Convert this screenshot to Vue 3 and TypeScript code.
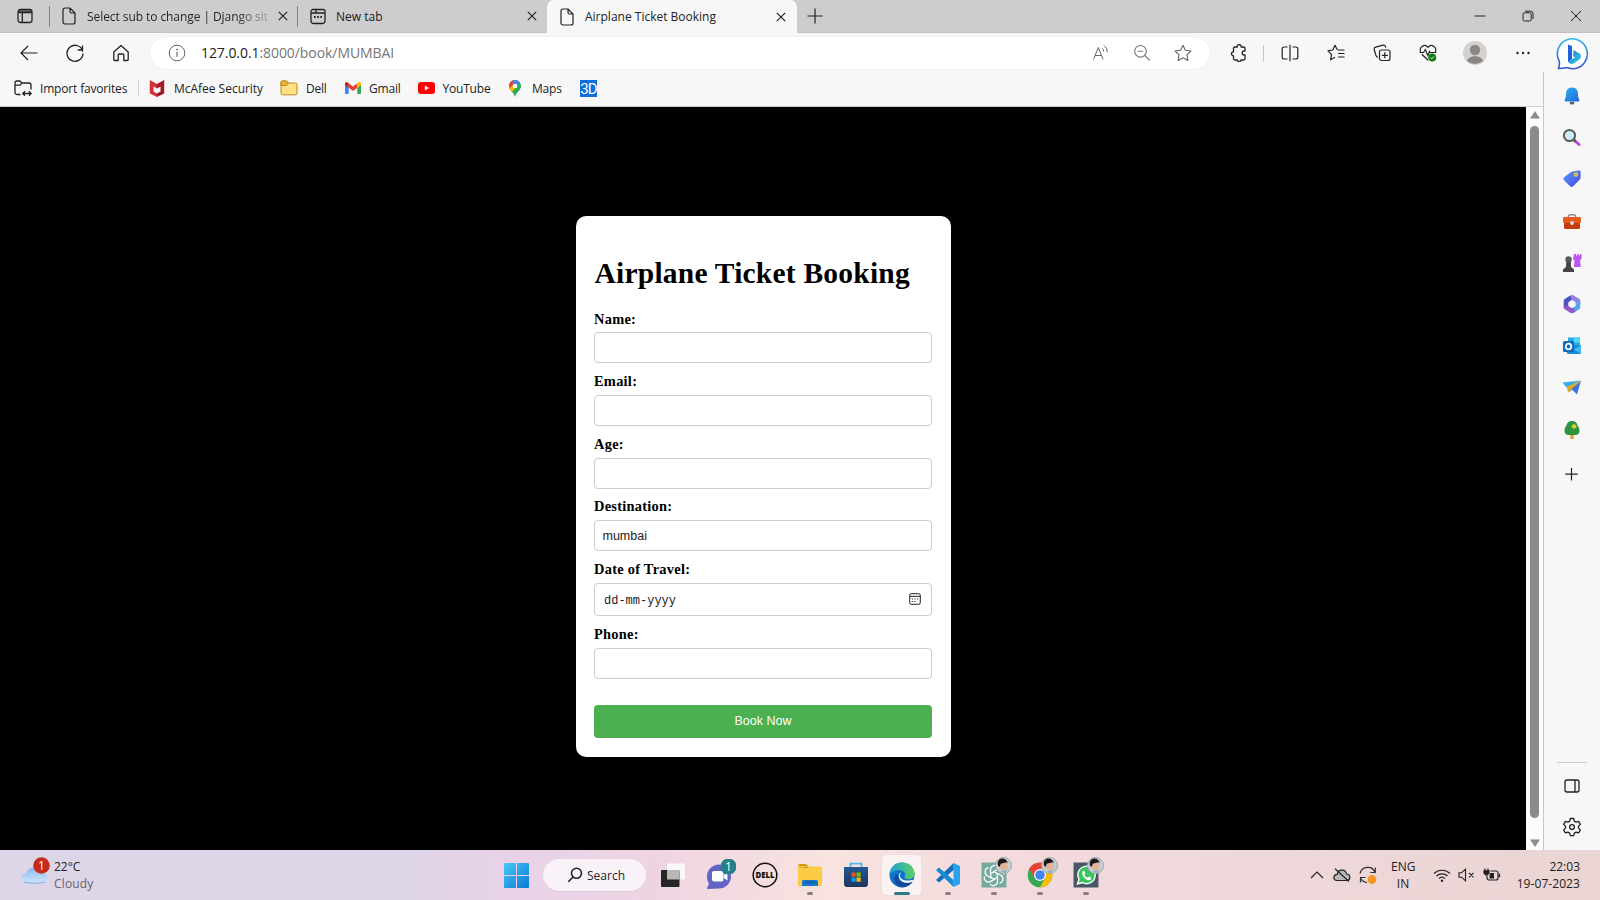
<script setup lang="ts">
import { ref } from 'vue'

interface Field {
  id: string
  label: string
  value: string
  kind: 'text' | 'date'
}

const fields = ref<Field[]>([
  { id: 'name', label: 'Name:', value: '', kind: 'text' },
  { id: 'email', label: 'Email:', value: '', kind: 'text' },
  { id: 'age', label: 'Age:', value: '', kind: 'text' },
  { id: 'destination', label: 'Destination:', value: 'mumbai', kind: 'text' },
  { id: 'date', label: 'Date of Travel:', value: '', kind: 'date' },
  { id: 'phone', label: 'Phone:', value: '', kind: 'text' },
])
</script>

<template>
  <div class="screen">
    <header class="tabs">
      <div class="tab-menu">
        <svg width="16" height="16" viewBox="0 0 16 16" fill="none" stroke="#222" stroke-width="1.3"><rect x="1" y="1.5" width="14" height="13" rx="2.5" /><path d="M1 3.2h14M1.5 4.6h13M5.3 5v9" /></svg>
      </div>
      <div class="tab first">
        <svg class="page" width="14" height="18" viewBox="0 0 14 18" fill="none" stroke="#222" stroke-width="1.2"><path d="M3 1h5l5 5v9a2 2 0 0 1-2 2H3a2 2 0 0 1-2-2V3a2 2 0 0 1 2-2zM8 1v3.5A1.5 1.5 0 0 0 9.500 6H13" /></svg>
        <span class="title faded">Select sub to change | Django sit</span>
        <svg class="x" width="10" height="10" viewBox="0 0 10 10" stroke="#222" stroke-width="1.2"><path d="M.8.8l8.400 8.400M9.200.8L.8 9.200" /></svg>
      </div>
      <div class="tab second">
        <svg class="page" width="16" height="17" viewBox="0 0 16 17" fill="none" stroke="#222" stroke-width="1.300"><path d="M1 5V3.500A2 2 0 0 1 3 1.500h10a2 2 0 0 1 2 2V13a2.500 2.500 0 0 1-2.500 2.500h-9A2.500 2.500 0 0 1 1 13zM1 5h14M6 1.500V3.500a1.500 1.500 0 0 0 1.500 1.500" /><path d="M4 9h1.600M7.200 9h1.600M10.400 9H12" stroke-width="1.800" /></svg>
        <span class="title new-title">New tab</span>
        <svg class="x" width="10" height="10" viewBox="0 0 10 10" stroke="#222" stroke-width="1.2"><path d="M.8.8l8.400 8.400M9.200.8L.8 9.200" /></svg>
      </div>
      <div class="tab active">
        <svg class="page" width="14" height="18" viewBox="0 0 14 18" fill="none" stroke="#222" stroke-width="1.2"><path d="M3 1h5l5 5v9a2 2 0 0 1-2 2H3a2 2 0 0 1-2-2V3a2 2 0 0 1 2-2zM8 1v3.500A1.500 1.500 0 0 0 9.500 6H13" /></svg>
        <span class="title">Airplane Ticket Booking</span>
        <svg class="x" width="10" height="10" viewBox="0 0 10 10" stroke="#222" stroke-width="1.2"><path d="M.8.8l8.400 8.400M9.200.8L.8 9.200" /></svg>
      </div>
      <svg class="new" width="16" height="16" viewBox="0 0 16 16" stroke="#222" stroke-width="1.2"><path d="M8 .5v15M.5 8h15" /></svg>
      <div class="win">
        <svg width="12" height="12" viewBox="0 0 12 12" stroke="#222" fill="none"><path d="M.5 6h11" /></svg>
        <svg width="12" height="12" viewBox="0 0 12 12" stroke="#222" fill="none"><rect x="1" y="2.800" width="8.200" height="8.200" rx="1.500" /><path d="M3 1.200h5.500A2.500 2.500 0 0 1 11 3.700V9" /></svg>
        <svg width="12" height="12" viewBox="0 0 12 12" stroke="#222" fill="none"><path d="M.8.8l10.400 10.400M11.200.8L.8 11.200" /></svg>
      </div>
    </header>

    <nav class="toolbar">
      <div class="nav-buttons">
        <svg width="20" height="20" viewBox="0 0 20 20" fill="none" stroke="#222" stroke-width="1.200"><path d="M18.500 10H2M9 3L2 10l7 7" /></svg>
        <svg width="20" height="20" viewBox="0 0 20 20" fill="none" stroke="#222" stroke-width="1.300"><path d="M17.800 8.500A8 8 0 1 0 18 10.500M17.500 2.500V7h-4.800" /></svg>
        <svg width="20" height="20" viewBox="0 0 20 20" fill="none" stroke="#222" stroke-width="1.300" stroke-linejoin="round"><path d="M2.800 9L10 2.500 17.200 9v7.500a1 1 0 0 1-1 1h-3.400V12a1 1 0 0 0-1-1H8.200a1 1 0 0 0-1 1v5.500H3.800a1 1 0 0 1-1-1z" /></svg>
      </div>
      <div class="address">
        <svg width="18" height="18" viewBox="0 0 18 18" fill="none" stroke="#666"><circle cx="9" cy="9" r="7.800" /><path d="M9 7.800v5" stroke-width="1.200" /><circle cx="9" cy="5.500" r=".5" fill="#666" /></svg>
        <span class="url"><b>127.0.0.1</b>:8000/book/MUMBAI</span>
        <div class="addr-actions">
          <svg width="18" height="18" viewBox="0 0 18 18" fill="none" stroke="#666"><path d="M1.500 15.500L6.300 3.500l4.800 12M3.200 11.500h6.200M10.200 4.200a4.500 4.500 0 0 1 1.500 3.300M12 1.500a8.500 8.500 0 0 1 3.400 6.800" /></svg>
          <svg width="18" height="18" viewBox="0 0 18 18" fill="none" stroke="#777" stroke-width="1.100"><circle cx="7.500" cy="7.300" r="5.800" /><path d="M4.800 7.300h5.400M11.800 11.500l5 5" /></svg>
          <svg width="18" height="18" viewBox="0 0 18 18" fill="none" stroke="#666" stroke-width="1.100" stroke-linejoin="round"><path d="M9 1.200l2.400 5 5.500.8-4 3.800 1 5.600L9 13.800l-4.900 2.600 1-5.600L1.100 7l5.500-.8z" /></svg>
        </div>
      </div>
      <div class="tool-icons">
        <svg width="18" height="18" viewBox="0 0 18 18" fill="none" stroke="#222" stroke-width="1.300" stroke-linejoin="round"><path d="M5 3h2.200a2 2 0 1 1 3.900 0h2.400A1.500 1.500 0 0 1 15 4.500V7h-.8a2 2 0 0 0 0 4H15v3.500a1.500 1.500 0 0 1-1.500 1.500h-2.400a2 2 0 0 1-3.900 0H5a1.500 1.500 0 0 1-1.500-1.500v-2.700a2 2 0 1 1 0-4V4.500A1.500 1.500 0 0 1 5 3z" /></svg>
        <i class="sep"></i>
        <svg width="18" height="18" viewBox="0 0 18 18" fill="none" stroke="#222" stroke-width="1.200"><path d="M9 .8v16.400M6.500 3H3a1.800 1.800 0 0 0-1.800 1.800v8.400A1.800 1.800 0 0 0 3 15h3.500M11.500 3H15a1.800 1.800 0 0 1 1.800 1.800v8.400A1.800 1.800 0 0 1 15 15h-3.500" /></svg>
        <svg width="18" height="18" viewBox="0 0 18 18" fill="none" stroke="#222" stroke-width="1.200" stroke-linejoin="round"><path d="M10.300 5.800L8 1.300 5.800 6 1 6.800l3.500 3.500-.9 5.500L8 13.300M10.500 6h7M11 9.500h6.500M11 13h6.500" /></svg>
        <svg width="18" height="18" viewBox="0 0 18 18" fill="none" stroke="#222" stroke-width="1.200"><rect x="6.500" y="6" width="10.500" height="10.500" rx="2" /><path d="M11.800 8.300v6M8.800 11.300h6M4.800 13.500C3 12.800 2.800 11.500 2.500 10L1.200 5.500A2 2 0 0 1 2.600 3.200L10 1.200c1.400-.3 2.200.5 2.500 1.500l.3 1" /></svg>
        <svg width="18" height="18" viewBox="0 0 18 18" fill="none" stroke="#222" stroke-width="1.200"><path d="M1.600 8C-.2 3 5.500-.7 9 3.300c3.500-4 9.200-.3 7.400 4.700M2.800 10.200L9 16.300M.5 8.500h4l1.800-3 2.500 6 1.700-4 .8 1h6" /><circle cx="13.200" cy="13.500" r="3.800" fill="#107c10" stroke="#107c10" stroke-width=".6" /><path d="M11.400 13.600l1.300 1.300 2.300-2.400" stroke="#fff" stroke-width=".9" /></svg>
        <svg class="avatar" width="24" height="24" viewBox="0 0 24 24"><circle cx="12" cy="12" r="12" fill="#d4d1cf" /><circle cx="12" cy="9" r="5.200" fill="#8b8785" /><path d="M4 20c1.500-6.500 14.500-6.500 16 0a12 12 0 0 1-16 0z" fill="#8b8785" /></svg>
        <svg width="18" height="18" viewBox="0 0 18 18" fill="#222"><circle cx="3.500" cy="9" r="1.200" /><circle cx="9" cy="9" r="1.200" /><circle cx="14.500" cy="9" r="1.200" /></svg>
        <svg class="bing" width="34" height="34" viewBox="0 0 34 34"><defs><linearGradient id="bb" x2="0" y2="1"><stop stop-color="#34b9ef" /><stop offset="1" stop-color="#3553cf" /></linearGradient><linearGradient id="bl" x2="1" y2="1"><stop stop-color="#226bd8" /><stop offset="1" stop-color="#36d8e8" /></linearGradient></defs><path d="M2.500 31.500c1-2.500 1.300-4.500.7-7.500A15 15 0 1 1 17.500 31.800c-2.500 0-4.500-.6-6-1.300-3 .5-5.500 1.200-9 1z" fill="#fff" stroke="url(#bb)" stroke-width="1.600" stroke-linejoin="round" /><path d="M12 7.500l4 1.500v13l-4 3z" fill="#1d63dc" /><path d="M17.500 13l6 3.500c2 1.500 2 4 0 6l-5 3.500c-3 1.800-5 .8-6.500-1.500l7-4-2-1.500z" fill="url(#bl)" /></svg>
      </div>
    </nav>

    <div class="bookmarks">
      <div class="mark import">
        <svg width="18" height="17" viewBox="0 0 18 17" fill="none" stroke="#222" stroke-width="1.300"><path d="M6.500 14.500H3a2 2 0 0 1-2-2V3a2 2 0 0 1 2-2h2.800L8 3h7a2 2 0 0 1 2 2v4.500M1 5.200h5L8 3M9 13.500h8M11 11.300l-2.200 2.200L11 15.700M15 11.300l2.200 2.200-2.200 2.200" /></svg>
        <span>Import favorites</span>
      </div>
      <div class="mark mcafee">
        <svg width="16" height="17" viewBox="0 0 16 17"><path d="M.8 0L8 4v4.500L4.500 6.500v5L8 13.500V17L.8 13.500z" fill="#d5303a" /><path d="M15.200 0L8 4v4.500l3.500-2v5L8 13.500V17l7.200-3.500z" fill="#a3192a" /></svg>
        <span>McAfee Security</span>
      </div>
      <div class="mark dell">
        <svg width="18" height="16" viewBox="0 0 18 16" stroke="#b98a1a"><path d="M1 13V2.500A1.500 1.500 0 0 1 2.500 1h4l2 2h7A1.500 1.500 0 0 1 17 4.500V13a1.800 1.800 0 0 1-1.800 1.800H2.800A1.800 1.800 0 0 1 1 13z" fill="#ffe083" /><path d="M1 5.500h5.500L8.500 3l-2-2h-4A1.500 1.500 0 0 0 1 2.500z" fill="#e9b63a" /></svg>
        <span>Dell</span>
      </div>
      <div class="mark gmail">
        <svg width="16" height="12" viewBox="0 0 16 12"><path d="M1 12h2.700V5.500L0 2.800V11a1 1 0 0 0 1 1z" fill="#4285f4" /><path d="M12.300 12H15a1 1 0 0 0 1-1V2.800l-3.700 2.700z" fill="#34a853" /><path d="M3.700 1.200v4.500L8 9l4.300-3.300V1.200L8 4.500z" fill="#ea4335" /><path d="M0 1.800v1.500l3.700 2.600V1.200L2.500.4C1.300-.5 0 .4 0 1.800z" fill="#c5221f" /><path d="M16 1.800v1.500l-3.700 2.600V1.200l1.200-.8C14.700-.5 16 .4 16 1.800z" fill="#fbbc04" /></svg>
        <span>Gmail</span>
      </div>
      <div class="mark youtube">
        <svg width="17" height="12" viewBox="0 0 17 12"><rect width="17" height="12" rx="3" fill="#f00" /><path d="M6.800 3.500v5l4.300-2.500z" fill="#fff" /></svg>
        <span>YouTube</span>
      </div>
      <div class="mark maps">
        <svg width="12" height="17" viewBox="0 0 12 17"><defs><clipPath id="pin"><path d="M6 0a6 6 0 0 1 6 6c0 4.500-4.500 5.500-6 11C4.500 11.500 0 10.500 0 6a6 6 0 0 1 6-6z" /></clipPath></defs><g clip-path="url(#pin)"><path d="M0 0h12v17H0z" fill="#34a853" /><path d="M-1 11L12-3 0-2z" fill="#ea4335" /><path d="M3 0h10L6.500 7z" fill="#4285f4" /><path d="M-1 5l3-2 5 4-5 6z" fill="#fbbc04" /><path d="M-1 5l3-4 3 3-4 4z" fill="#ea4335" /></g><circle cx="6" cy="6" r="2.300" fill="#fff" /></svg>
        <span>Maps</span>
      </div>
      <div class="three-d">3D</div>
    </div>

    <main class="viewport">
      <form class="card" @submit.prevent>
        <h1>Airplane Ticket Booking</h1>
        <div v-for="field in fields" :key="field.id" class="field">
          <label :for="field.id">{{ field.label }}</label>
          <div v-if="field.kind === 'date'" class="control date">
            <span>dd-mm-yyyy</span>
            <svg width="12" height="12" viewBox="0 0 12 12" fill="none" stroke="#222"><rect x=".7" y=".7" width="10.600" height="10.600" rx="1.500" /><path d="M.7 3.300h10.600" /><path d="M2.800 6h1.100M5.400 6h1.100M8 6h1.100M2.800 8.500h1.100M5.400 8.500h1.100" stroke-width="1.200" /></svg>
          </div>
          <input v-else :id="field.id" v-model="field.value" class="control" type="text" />
        </div>
        <button type="submit">Book Now</button>
      </form>
    </main>

    <div class="scrollbar">
      <svg width="10" height="8" viewBox="0 0 10 8"><path d="M5 .5L9.500 7.200H.5z" fill="#8b8b8b" stroke="#8b8b8b" stroke-width=".6" stroke-linejoin="round" /></svg>
      <div class="thumb"></div>
      <svg width="10" height="8" viewBox="0 0 10 8"><path d="M5 7.500L9.500.8H.5z" fill="#8b8b8b" stroke="#8b8b8b" stroke-width=".6" stroke-linejoin="round" /></svg>
    </div>

    <aside class="sidebar">
      <div class="apps">
        <svg viewBox="0 0 20 20"><defs><linearGradient id="bell" x2="1" y2="1"><stop stop-color="#2bb1f0" /><stop offset="1" stop-color="#2864df" /></linearGradient></defs><ellipse cx="10" cy="17" rx="2.500" ry="1.500" fill="#56647a" /><path d="M10 1.500c4.500 0 6 3.500 6 6.500 0 3 .7 4.500 1.200 5.500.5 1.200.2 2-.8 2H3.600c-1 0-1.300-.8-.8-2C3.300 12.500 4 11 4 8c0-3 1.500-6.500 6-6.500z" fill="url(#bell)" /></svg>
        <svg viewBox="0 0 20 20"><path d="M12.500 12.500l4.500 4" stroke="#b94be0" stroke-width="3" stroke-linecap="round" /><path d="M11 11l2.500 2.500" stroke="#555" stroke-width="2.500" /><circle cx="7.500" cy="7.500" r="5.600" fill="#c9eafa" stroke="#5e5e5e" stroke-width="2" /></svg>
        <svg viewBox="0 0 20 20"><defs><linearGradient id="tag" x2="1" y2="1"><stop stop-color="#579aff" /><stop offset="1" stop-color="#4647df" /></linearGradient></defs><path d="M10.500 2.500L17 1.500c1.200-.1 1.600.4 1.600 1.500v5.500c0 1-.4 1.700-1 2.300l-6.500 6.500c-1 1-2 1-3 0l-6-6c-1-1-1-2 0-3l6.500-5z" fill="url(#tag)" /><circle cx="14" cy="5.500" r="2.200" fill="#edcf49" /><circle cx="14" cy="5.500" r=".8" fill="#777" /></svg>
        <svg viewBox="0 0 20 20"><path d="M6.500 7V5.500A1.800 1.800 0 0 1 8.300 3.700h3.500a1.800 1.800 0 0 1 1.800 1.800V7" fill="none" stroke="#8a8a8a" stroke-width="1.400" /><path d="M2 10h16v6.500a1.500 1.500 0 0 1-1.500 1.500h-13A1.500 1.500 0 0 1 2 16.500z" fill="#c53b10" /><rect x="1" y="6" width="18" height="6" rx="1.200" fill="#e7591d" /><circle cx="10" cy="12" r="1.900" fill="#dedede" /></svg>
        <svg viewBox="0 0 20 20"><path d="M12 1h2v1.500h1.500V1h1.500v1.500H18V1h1.500v5l-1.500 1 .8 7H12L12.500 7 11 6z" fill="#bd55ef" /><circle cx="6.500" cy="6.500" r="3.200" fill="#595959" /><path d="M4.300 9h4.500L9 14l3 2.500V19H1v-2.500L4 14z" fill="#444" /></svg>
        <svg viewBox="0 0 20 20" fill="none" stroke-width="4.600" stroke-linejoin="round"><path d="M4 13.500V7L9.500 3.300" stroke="#4b52b8" /><path d="M9 3.600L10 3.200l6 3.500v3.300" stroke="#8f82e6" /><path d="M16 8.500v4.800l-5.500 3.500" stroke="#58a7ee" /><path d="M12.500 15.800L10 17l-6-3.700v-1" stroke="#9457c8" /></svg>
        <svg viewBox="0 0 20 20"><path d="M6 1.500h12v10H6z" fill="#28a8ea" /><path d="M12 1.500h6v5h-6z" fill="#50d9ff" /><path d="M5 9h14v9H6.500A1.500 1.500 0 0 1 5 16.500z" fill="#178bd5" /><path d="M12 13.500L19 9v9z" fill="#3cbdf2" /><rect x="1" y="5" width="11" height="11" rx="1.500" fill="#0f6cbd" /><circle cx="6.500" cy="10.500" r="2.800" fill="none" stroke="#fff" stroke-width="1.700" /></svg>
        <svg viewBox="0 0 20 20"><path d="M.5 4.500L19 2.500 4.500 9.500z" fill="#38aee9" /><path d="M19 2.500L15 16.500 9.500 11z" fill="#3b73e6" /><path d="M5 9L19 2.500 6 14.500z" fill="#e7a324" /><path d="M6 14.500L19 2.500 10 12z" fill="#4f78a3" /></svg>
        <svg viewBox="0 0 20 20"><path d="M8.300 13h3.400v6H8.300z" fill="#e5a138" /><path d="M10 1c4 0 5 2.500 5.500 4.500C17 7 17.500 8.500 17.500 11c0 2.500-2 4-4 4h-7c-2 0-4-1.500-4-4 0-2.500.5-4 2-5.500C5 3.500 6 1 10 1z" fill="#2c943f" /><path d="M11.500 3.500l1.300 1.300 1.700.2-.5 1.500.8 1.500-2 .2-1.300 1-.8-1.500-1.700-.8 1.300-1.300z" fill="#d5cc31" /></svg>
        <svg class="add" viewBox="0 0 20 20" stroke="#222" stroke-width="1.200"><path d="M9.500 4v12.500M3.300 10.200h12.500" /></svg>
      </div>
      <div class="settings">
        <svg viewBox="0 0 20 20" fill="none" stroke="#222" stroke-width="1.300"><rect x="3" y="4" width="14" height="12" rx="2" /><path d="M13 4v12" /></svg>
        <svg viewBox="0 0 20 20" fill="none" stroke="#222" stroke-width="1.300" stroke-linejoin="round"><path d="M8.300 1.500h3.400l.6 2.600 1.800 1 2.500-.8 1.800 3-1.900 1.800v2l1.900 1.800-1.800 3-2.500-.8-1.800 1-.6 2.500H8.300l-.6-2.500-1.800-1-2.500.8-1.800-3 1.900-1.800v-2L1.600 7.300l1.800-3 2.500.8 1.800-1z" /><circle cx="10" cy="10.100" r="2.400" /></svg>
      </div>
    </aside>

    <footer class="taskbar">
      <div class="weather">
        <svg width="30" height="30" viewBox="0 0 30 30"><defs><linearGradient id="cl" x2="0" y2="1"><stop stop-color="#8db8ee" /><stop offset="1" stop-color="#cfe6fc" /></linearGradient></defs><path d="M5.500 26a5 5 0 0 1 0-10C6 10 15.500 8 18.500 15.500 24 13.500 26 18 26 21s-2 5-5 5z" fill="url(#cl)" /><path d="M3 25c4 1.500 17 1.500 21 0" stroke="#7ca9e8" fill="none" /><circle cx="20.500" cy="8.500" r="8.300" fill="#c42b1c" /><text x="20.500" y="12.800" text-anchor="middle" fill="#fff" font-size="12">1</text></svg>
        <div><span class="temp">22°C</span><span class="sky">Cloudy</span></div>
      </div>
      <div class="pins">
        <div class="start-slot"><svg width="25" height="25" viewBox="0 0 25 25"><defs><linearGradient id="win" x2="1" y2="1"><stop stop-color="#4cc9f7" /><stop offset="1" stop-color="#0878d4" /></linearGradient></defs><path d="M0 1a1 1 0 0 1 1-1h11v12H0zM13 0h11a1 1 0 0 1 1 1v11H13zM0 13h12v12H1a1 1 0 0 1-1-1zM13 13h12v11a1 1 0 0 1-1 1H13z" fill="url(#win)" /></svg></div>
        <div class="search"><svg width="16" height="16" viewBox="0 0 16 16" fill="none" stroke="#222" stroke-width="1.600"><circle cx="9.500" cy="6.300" r="5" /><path d="M6 10L1.300 14.700" /></svg><span>Search</span></div>
        <div class="pin"><svg width="26" height="26" viewBox="0 0 26 26"><rect x="7" y="1.500" width="18" height="16" rx="1" fill="#f8f8f8" /><rect x="1" y="8" width="18.500" height="17" rx="1" fill="#252525" /><path d="M7 8h12.500v9.500H7z" fill="#b9b6b6" /></svg></div>
        <div class="pin"><svg class="chat" width="32" height="32" viewBox="0 0 32 32"><path d="M3 17.500A12 12 0 1 1 15 29.500L4 30c-1 0-1.300-.6-.8-1.500L5 25a12 12 0 0 1-2-7.500z" fill="#6264c7" /><rect x="8" y="12" width="11.500" height="10.500" rx="2" fill="#fff" /><path d="M20 16l3.500-3v8.500L20 19z" fill="#fff" /><circle cx="24.500" cy="7.500" r="8" fill="#278087" /><text x="24.500" y="11.800" text-anchor="middle" fill="#fff" font-size="12">1</text></svg></div>
        <div class="pin"><svg class="dell-logo" width="26" height="26" viewBox="0 0 26 26"><circle cx="13" cy="13" r="11.800" fill="none" stroke="#111" stroke-width="1.500" /><text x="13" y="16" text-anchor="middle" font-size="8.500" font-weight="800" textLength="19" lengthAdjust="spacingAndGlyphs" fill="#111">DELL</text></svg></div>
        <div class="pin run"><svg width="26" height="26" viewBox="0 0 26 26"><path d="M1 4a2 2 0 0 1 2-2h6l3 2.500H1z" fill="#d49a13" /><path d="M1 4.500h22.500A1.500 1.500 0 0 1 25 6v18H1z" fill="#fbcb46" /><path d="M1 6h9l2-1.500" fill="#d49a13" /><path d="M5 24v-4.500A1.500 1.500 0 0 1 6.500 18h13a1.500 1.500 0 0 1 1.500 1.500V24z" fill="#1576cb" /><path d="M8 20.500h10" stroke="#0d5ba9" stroke-width="1.500" /></svg></div>
        <div class="pin"><svg width="26" height="26" viewBox="0 0 26 26"><defs><linearGradient id="st" x2="0" y2="1"><stop stop-color="#23588f" /><stop offset="1" stop-color="#1a3560" /></linearGradient></defs><path d="M7.500 6V1.700h11V6" fill="none" stroke="#4db7ee" stroke-width="1.800" /><path d="M1 5h24v17a3 3 0 0 1-3 3H4a3 3 0 0 1-3-3z" fill="url(#st)" /><path d="M8.500 10.500h4.200v4.200H8.500z" fill="#f25022" /><path d="M13.500 10.500h4.200v4.200h-4.200z" fill="#7fba00" /><path d="M8.500 15.500h4.200v4.200H8.500z" fill="#00a4ef" /><path d="M13.500 15.500h4.200v4.200h-4.200z" fill="#ffb900" /></svg></div>
        <div class="pin run current"><svg width="26" height="26" viewBox="0 0 26 26"><defs><linearGradient id="eg" x2="1"><stop stop-color="#219fd9" /><stop offset="1" stop-color="#5bd061" /></linearGradient></defs><circle cx="13" cy="13" r="12.500" fill="#1372c5" /><path d="M.5 12C2-3 24-3 25.500 11c.3 5-4 7-8 6-2-.5-2.500-1.500-1.500-3 1.500-5-7-9.500-15.500-2z" fill="url(#eg)" /><path d="M9 12c-1 7 5 11.500 15 7-4 7-12 8-17 3-3-3.500-2-8 2-10z" fill="#11499b" /><path d="M12.500 10.500c-3 1.500-2 6 2 7.500 3 1 6.500.6 8.500 0 1.500-.4 1.600.5.8 1.500-5 3-14 1-14-6 .3-2 1.300-3 2.700-3z" fill="#fff" /></svg></div>
        <div class="pin run"><svg width="26" height="26" viewBox="0 0 26 26"><path d="M18.500 1L25 4v18l-6.500 3z" fill="#2aa3ee" /><path d="M18.500 1v7L4 20.500 1 18z" fill="#0c72bd" /><path d="M18.500 25v-7L4 5.500 1 8z" fill="#178bd3" /></svg></div>
        <div class="pin run"><svg width="26" height="26" viewBox="0 0 26 26"><path d="M.5.5h25v25H.5z" fill="#74aa9c" /><g fill="none" stroke="#fff" stroke-width="1.200"><path v-for="n in 6" :key="n" d="M13 9.800L9.500 11.800V7.300a4.300 4.300 0 0 1 7.500-2.500" :transform="`rotate(${n * 60} 13 13.5)`" /></g></svg>
          <svg class="face" width="17" height="17" viewBox="0 0 17 17"><circle cx="8.500" cy="8.500" r="8" fill="#c3cdd3" stroke="#a3a3a8" /><ellipse cx="8.700" cy="9" rx="3.900" ry="5.200" fill="#e3b49c" transform="rotate(-15 8.700 9)" /><path d="M3 8.500C1 1 11-1.500 13 6.500l-1.300-1.200-6 1.500L4.800 10z" fill="#1c181a" /><path d="M5.500 14.500c2-1 4.500-1.300 7-1l-3 2.600z" fill="#7fb6d1" /></svg></div>
        <div class="pin run"><svg width="26" height="26" viewBox="0 0 26 26"><circle cx="13" cy="13" r="12.300" fill="#34a853" /><path d="M2.300 6.800A12.300 12.300 0 0 1 23.700 6.800H13L7.700 16z" fill="#ea4335" /><path d="M23.700 6.800A12.300 12.300 0 0 1 13 25.300l5.300-9.200L13 6.800z" fill="#fbbc05" /><circle cx="13" cy="13" r="6" fill="#fff" /><circle cx="13" cy="13" r="4.800" fill="#4285f4" /></svg>
          <svg class="face" width="17" height="17" viewBox="0 0 17 17"><circle cx="8.500" cy="8.500" r="8" fill="#c3cdd3" stroke="#a3a3a8" /><ellipse cx="8.700" cy="9" rx="3.900" ry="5.200" fill="#e3b49c" transform="rotate(-15 8.700 9)" /><path d="M3 8.500C1 1 11-1.500 13 6.500l-1.300-1.200-6 1.500L4.800 10z" fill="#1c181a" /><path d="M5.500 14.500c2-1 4.500-1.300 7-1l-3 2.600z" fill="#7fb6d1" /></svg></div>
        <div class="pin run"><svg width="26" height="26" viewBox="0 0 26 26"><path d="M.5.5h25v25H.5z" fill="#455863" /><path d="M4.500 22L6 17.200A8.700 8.700 0 1 1 9.500 20.600z" fill="#3ac45c" stroke="#fff" stroke-width="1.400" /><path d="M9.500 9.500c.5-1 1.500-1 2-.2l.8 2-1 1.500c.8 1.500 1.800 2.400 3.200 3l1.300-1.300 2.200 1c.5.500 0 2-1 2.500-3 1.500-9-4-7.500-8.500z" fill="#fff" /></svg>
          <svg class="face" width="17" height="17" viewBox="0 0 17 17"><circle cx="8.500" cy="8.500" r="8" fill="#c3cdd3" stroke="#a3a3a8" /><ellipse cx="8.700" cy="9" rx="3.900" ry="5.200" fill="#e3b49c" transform="rotate(-15 8.700 9)" /><path d="M3 8.500C1 1 11-1.500 13 6.500l-1.300-1.200-6 1.500L4.800 10z" fill="#1c181a" /><path d="M5.500 14.500c2-1 4.500-1.300 7-1l-3 2.600z" fill="#7fb6d1" /></svg></div>
      </div>
      <div class="tray">
        <svg width="14" height="8" viewBox="0 0 14 8" fill="none" stroke="#222" stroke-width="1.200"><path d="M1 7l6-6 6 6" /></svg>
        <svg class="cloud" width="18" height="14" viewBox="0 0 18 14" fill="#b9b6b8" stroke="#222" stroke-width="1.200"><path d="M4 12.500C-.5 12.500 0 6.500 4.200 6.300 5 1 12.500.8 13.500 6c4.500.3 4.500 6.500 0 6.500z" /><path d="M2 .8l14 12.700" /></svg>
        <svg class="sync" width="18" height="18" viewBox="0 0 18 18" fill="none" stroke="#333" stroke-width="1.200"><path d="M1 7.500C3 0 13.500-.8 16 6.500M16.300 1.500v5h-5M1.500 16.500v-5h5M1.500 12c1.300 2.500 3.500 4.300 6.500 4.500" /><circle cx="13" cy="13.500" r="4.400" fill="#f7941d" stroke="none" /></svg>
        <div class="lang"><span>ENG</span><span>IN</span></div>
        <svg class="wifi" width="18" height="15" viewBox="0 0 18 15" fill="none" stroke="#222" stroke-width="1.200"><path d="M1 5.500a11.500 11.500 0 0 1 16 0M3.500 8a8 8 0 0 1 11 0M6 10.500a4.500 4.500 0 0 1 6 0" /><circle cx="9" cy="12.700" r="1.200" fill="#222" stroke="none" /></svg>
        <svg class="sound" width="17" height="14" viewBox="0 0 17 14" fill="none" stroke="#222" stroke-width="1.100"><path d="M1 4.800h2.500L7.500 1.200v11.600L3.500 9.200H1zM11 4.800l4.500 4.500M15.500 4.800L11 9.300" /></svg>
        <svg class="battery" width="18" height="14" viewBox="0 0 18 14" fill="none" stroke="#222" stroke-width="1.200"><path d="M7.500 3H13a2 2 0 0 1 2 2v5a2 2 0 0 1-2 2H6a2 2 0 0 1-2-2V8M16.500 5.800v3.500" /><path d="M7 5h4v5.500H6.500V8z" fill="#222" stroke="none" /><path d="M2 .5v2M5 .5v2M1 2.800h5V5L4.500 6.800h-2L1 5z" fill="#222" /></svg>
        <div class="clock"><span>22:03</span><span class="day">19-07-2023</span></div>
      </div>
    </footer>
  </div>
</template>

<style>
html,
body {
  margin: 0;
  overflow: hidden;
}
</style>

<style scoped>
* {
  box-sizing: border-box;
}
svg {
  display: block;
  flex: none;
}
.screen {
  width: 1600px;
  height: 900px;
  display: grid;
  grid-template-columns: 1526px 18px 56px;
  grid-template-rows: 33px 39px 35px 743px 50px;
  background: #f7f7f7;
  font-family: 'Open Sans', 'Noto Sans', sans-serif;
  font-size: 12px;
  color: #222;
  white-space: nowrap;
  overflow: hidden;
}
.tabs {
  grid-column: 1 / 4;
  display: flex;
  align-items: stretch;
  background: #cdcdcd;
  border-bottom: 1px solid #c2c2c2;
}
.tab-menu {
  width: 49px;
  display: flex;
  align-items: center;
  justify-content: center;
  padding-left: 1px;
}
.tab {
  display: flex;
  align-items: center;
}
.tab .x {
  margin-left: auto;
}
.first {
  width: 249px;
  border-left: 1px solid #858585;
  border-right: 1px solid #858585;
  border-image: linear-gradient(transparent 20%, #858585 20%, #858585 82%, transparent 82%) 1;
  padding: 0 9px 0 12px;
}
.second {
  width: 249px;
  padding: 0 10px 0 12px;
}
.active {
  width: 250px;
  height: 33px;
  padding: 0 11px 0 13px;
  background: #f7f7f7;
  border-radius: 7px 7px 0 0;
}
.title {
  margin-left: 11px;
}
.new-title {
  margin-left: 10px;
}
.faded {
  letter-spacing: -0.07px;
  background: linear-gradient(90deg, #222 82%, #aaa 100%);
  background-clip: text;
  color: transparent;
}
.new {
  margin: 8px 0 0 10px;
}
.win {
  margin-left: auto;
  display: flex;
  align-items: center;
  gap: 36px;
  padding-right: 18px;
}
.toolbar {
  grid-column: 1 / 4;
  display: flex;
  align-items: center;
  padding-top: 1px;
}
.nav-buttons {
  width: 150px;
  display: flex;
  gap: 26px;
  padding-left: 19px;
}
.address {
  width: 1060px;
  height: 32px;
  border-radius: 16px;
  background: #fff;
  box-shadow: 0 0 2px #e2e2e2;
  display: flex;
  align-items: center;
  padding: 0 18px;
}
.url {
  margin: -1px 0 0 15px;
  font-size: 14px;
  letter-spacing: -0.07px;
  color: #767676;
}
.url b {
  font-weight: 400;
  color: #222;
}
.addr-actions {
  margin-left: auto;
  display: flex;
  gap: 23px;
}
.tool-icons {
  flex: 1;
  display: flex;
  align-items: center;
  padding-left: 20px;
}
.tool-icons svg {
  margin-right: 28px;
}
.tool-icons svg:first-child {
  margin-right: 15px;
}
.tool-icons .sep {
  width: 1px;
  height: 17px;
  background: #c6c6c6;
  margin-right: 17px;
}
.tool-icons .avatar {
  margin: 0 27px 0 -2px;
}
.tool-icons .bing {
  margin: 2px 0 0 -4px;
}
.bookmarks {
  grid-column: 1 / 3;
  border-bottom: 1px solid #cfcfcf;
  border-right: 1px solid #c6c6c6;
  display: flex;
  align-items: center;
  padding: 0 0 2px 14px;
}
.mark {
  display: flex;
  align-items: center;
}
.mark span {
  letter-spacing: -0.2px;
}
.import {
  width: 125px;
  gap: 8px;
  background: linear-gradient(#cfcfcf, #cfcfcf) right center / 1px 16px no-repeat;
}
.import span {
  letter-spacing: -0.17px;
}
.mcafee {
  width: 141px;
  gap: 9px;
  padding-left: 10px;
}
.mcafee span {
  letter-spacing: -0.02px;
}
.dell {
  width: 65px;
  gap: 8px;
}
.gmail {
  width: 72.5px;
  gap: 8px;
}
.youtube {
  width: 91.5px;
  gap: 8px;
}
.maps {
  width: 71px;
  gap: 11px;
}
.three-d {
  width: 17px;
  height: 17px;
  background: #0f6fd8;
  color: #fff;
  font: 15px/18px 'Roboto', sans-serif;
  text-align: center;
  letter-spacing: -1px;
}
.viewport {
  grid-column: 1;
  grid-row: 4;
  background: #000;
  padding: 109px 0 0 576px;
}
.card {
  width: 375px;
  height: 541px;
  border-radius: 10px;
  background: #fff;
  padding: 37px 19px 0 18px;
  display: flex;
  flex-direction: column;
}
h1 {
  margin: 0 0 15.9px;
  padding-left: 0.5px;
  font: 700 29.5px/41px 'Liberation Serif', serif;
  letter-spacing: 0.22px;
  color: #000;
}
.field {
  margin-bottom: 8.93px;
  display: flex;
  flex-direction: column;
}
label {
  font: 700 14.4px/19px 'Liberation Serif', serif;
  letter-spacing: 0.27px;
  height: 22.6px;
  color: #000;
}
.control {
  width: 338px;
  height: 31px;
  border: 1px solid #ccc;
  border-radius: 4px;
  padding: 0 7.500px;
  font: 12.500px 'Liberation Sans', sans-serif;
  color: #222;
  background: #fff;
  outline: none;
}
.date {
  height: 33.5px;
  display: flex;
  align-items: center;
  justify-content: space-between;
  padding: 0 10px 0 9px;
  font: 12px 'Liberation Mono', monospace;
}
.date span {
  padding-top: 3px;
}
button {
  width: 338px;
  height: 33px;
  margin-top: 17.500px;
  border: 0;
  border-radius: 4px;
  background: #4caf50;
  color: #fff;
  font: 12.500px 'Liberation Sans', sans-serif;
}
.scrollbar {
  grid-column: 2;
  grid-row: 4;
  background: #fcfcfc;
  border-right: 1px solid #c6c6c6;
  display: flex;
  flex-direction: column;
  align-items: center;
  padding: 4px 0 3px;
}
.thumb {
  width: 9px;
  height: 692px;
  margin: 7px 0 auto;
  border-radius: 5px;
  background: #8b8b8b;
}
.sidebar {
  grid-column: 3;
  grid-row: 3 / 5;
  padding: 14px 0 13px;
  display: flex;
  flex-direction: column;
  align-items: center;
  justify-content: space-between;
}
.sidebar svg {
  width: 20px;
  height: 20px;
}
.apps {
  display: flex;
  flex-direction: column;
  gap: 21.700px;
}
.apps .add {
  margin-top: 2.500px;
}
.settings {
  width: 30px;
  display: flex;
  flex-direction: column;
  align-items: center;
  gap: 21.500px;
  border-top: 1px solid #ccc;
  padding-top: 13px;
}
.taskbar {
  grid-column: 1 / 4;
  grid-row: 5;
  display: flex;
  align-items: center;
  background: linear-gradient(90deg, #ddd6e8 0, #ddd5e8 390px, #e9d2e8 510px, #eed4e3 650px, #f8e3df 830px, #f4dbde 980px, #f0d9da 1150px, #ead4d4 1600px);
}
.weather {
  width: 495px;
  height: 50px;
  display: flex;
  padding: 7px 0 0 21px;
}
.weather div {
  margin: 1px 0 0 3px;
  line-height: 17px;
}
.weather span,
.lang span,
.clock span {
  display: block;
}
.sky {
  color: #66616b;
  letter-spacing: 0.15px;
}
.pins {
  display: flex;
  align-items: center;
  height: 50px;
}
.start-slot {
  width: 48px;
  padding-left: 9px;
}
.search {
  width: 103px;
  height: 32px;
  margin-right: 4px;
  border-radius: 16px;
  background: #f9f2f9;
  display: flex;
  align-items: center;
  padding-left: 24px;
  gap: 4px;
  box-shadow: 0 1px 1px #dccbd9;
}
.pin {
  position: relative;
  width: 39px;
  height: 40px;
  margin-left: 3px;
  margin-right: 3.900px;
  display: flex;
  align-items: center;
  justify-content: center;
}
.chat {
  margin-left: 4px;
}
.dell-logo {
  margin-left: 2px;
}
.run::after {
  content: '';
  position: absolute;
  bottom: 0;
  left: 50%;
  width: 6px;
  height: 3px;
  margin-left: -3px;
  border-radius: 2px;
  background: #8a7d80;
}
.current {
  background: #fbf2f3;
  border-radius: 4px;
  box-shadow: 0 0 1px #d4bdc1;
}
.current::after {
  width: 16px;
  margin-left: -8px;
  background: #2b7d86;
}
.face {
  position: absolute;
  top: 2px;
  right: 1px;
}
.tray {
  flex: 1;
  display: flex;
  align-items: center;
  justify-content: flex-end;
  padding-right: 20px;
  line-height: 17px;
}
.cloud {
  margin-left: 9px;
}
.sync {
  margin-left: 8px;
}
.lang {
  width: 24px;
  margin: 0 18px 0 14px;
  text-align: center;
}
.sound {
  margin-left: 7px;
}
.battery {
  margin: 0 15px 0 8px;
}
.clock {
  width: 64px;
  text-align: right;
}
.day {
  letter-spacing: 0.07px;
}
</style>
